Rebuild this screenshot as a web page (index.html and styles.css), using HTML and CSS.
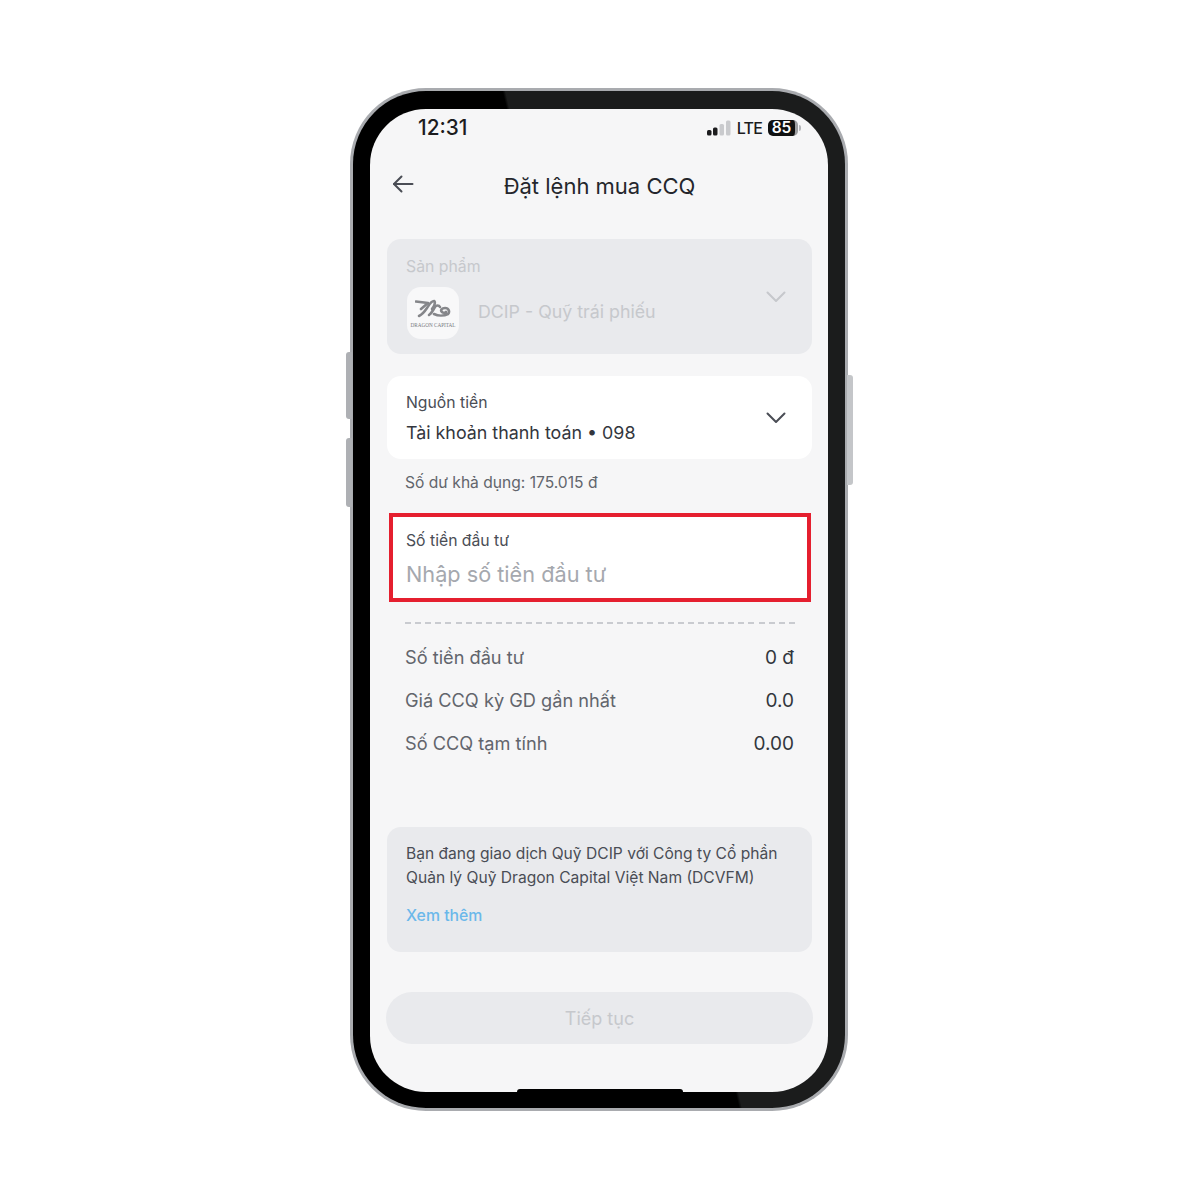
FILE: index.html
```html
<!DOCTYPE html>
<html lang="vi">
<head>
  <meta charset="UTF-8" />
  <title>Đặt lệnh mua CCQ</title>
  <link rel="stylesheet" href="styles.css">
</head>
<body>
  <div class="phone">
    <span class="side-btn side-vol-up"></span>
    <span class="side-btn side-vol-down"></span>
    <span class="side-btn side-power"></span>
    <div class="bezel">
      <span class="home-bar"></span>
      <div class="screen">
        <div class="status-bar">
          <span class="time">12:31</span>
          <div class="status-right">
            <svg class="signal" width="24" height="16" viewBox="0 0 24 16">
              <rect x="0" y="10" width="4.5" height="5.5" rx="1.5" fill="#1c1c1e"/>
              <rect x="6" y="7.5" width="4.5" height="8" rx="1.5" fill="#1c1c1e"/>
              <rect x="12.5" y="4" width="4.5" height="11.5" rx="1.5" fill="#c9cacd"/>
              <rect x="19" y="0.5" width="4.5" height="15" rx="1.5" fill="#c9cacd"/>
            </svg>
            <span class="lte">LTE</span>
            <span class="battery">85</span>
            <span class="battery-tip"></span>
          </div>
        </div>

        <div class="nav-bar">
          <svg class="back" width="22" height="18" viewBox="0 0 22 18" fill="none" stroke="#4a4d55" stroke-width="2" stroke-linecap="round" stroke-linejoin="round">
            <path d="M20.5 9H2"/>
            <path d="M9.5 1.5L2 9l7.5 7.5"/>
          </svg>
          <h1 class="title">Đặt lệnh mua CCQ</h1>
        </div>

        <div class="card card-disabled">
          <div class="label">Sản phẩm</div>
          <div class="product-row">
            <div class="logo">
              <svg width="36" height="19" viewBox="0 0 36 19" fill="none" stroke="#85868a" stroke-width="2.6" stroke-linecap="round" stroke-linejoin="round">
                <path d="M1 2.5l12 1.5-7 6"/>
                <path d="M4 17c4-2 6-5 8-8 2-3 4-7 7-7 2 1 0 6-2 8"/>
                <path d="M14 16c3-2 4-5 6-8 1-2 4-2 5 0"/>
                <path d="M19 15c4 2 10 2 14 0 2-2 1-6-3-6-3 0-5 2-3 4 1 1 3 1 4 0"/>
              </svg>
              <span class="logo-text">DRAGON CAPITAL</span>
            </div>
            <span class="product-name">DCIP - Quỹ trái phiếu</span>
          </div>
          <svg class="chevron chevron-disabled" width="20" height="12" viewBox="0 0 20 12" fill="none" stroke-width="2" stroke-linecap="round" stroke-linejoin="round">
            <path d="M1.5 1.5l8.5 8.5 8.5-8.5"/>
          </svg>
        </div>

        <div class="card card-source">
          <div class="label">Nguồn tiền</div>
          <div class="source-value">Tài khoản thanh toán • 098</div>
          <svg class="chevron" width="20" height="12" viewBox="0 0 20 12" fill="none" stroke-width="2" stroke-linecap="round" stroke-linejoin="round">
            <path d="M1.5 1.5l8.5 8.5 8.5-8.5"/>
          </svg>
        </div>

        <div class="balance">Số dư khả dụng: 175.015 đ</div>

        <div class="amount-box">
          <div class="label">Số tiền đầu tư</div>
          <div class="placeholder">Nhập số tiền đầu tư</div>
        </div>

        <div class="divider"></div>

        <div class="summary">
          <div class="summary-row"><span>Số tiền đầu tư</span><span class="summary-val">0 đ</span></div>
          <div class="summary-row"><span>Giá CCQ kỳ GD gần nhất</span><span class="summary-val">0.0</span></div>
          <div class="summary-row"><span>Số CCQ tạm tính</span><span class="summary-val">0.00</span></div>
        </div>

        <div class="info-card">
          <p>Bạn đang giao dịch Quỹ DCIP với Công ty Cổ phần Quản lý Quỹ Dragon Capital Việt Nam (DCVFM)</p>
          <div class="more">Xem thêm</div>
        </div>

        <div class="next-btn">Tiếp tục</div>
      </div>
    </div>
  </div>
</body>
</html>
```

FILE: styles.css
```css
* {
  margin: 0;
  padding: 0;
  box-sizing: border-box;
  font-family: 'Inter', 'Liberation Sans', sans-serif;
}

body {
  background-color: #fff;
  display: flex;
  justify-content: center;
  padding-top: 88px;
  height: 1200px;
  overflow: hidden;
}

.phone {
  position: relative;
  width: 498px;
  height: 1023px;
  margin-right: 2px;
  padding: 3px;
  border-radius: 76px;
  background-color: #a9abaf;
}

.side-btn {
  position: absolute;
  width: 6px;
  background-color: #aeb0b4;
}

.side-vol-up {
  left: -4px;
  top: 264px;
  height: 67px;
  border-radius: 3px 0 0 3px;
}

.side-vol-down {
  left: -4px;
  top: 350px;
  height: 69px;
  border-radius: 3px 0 0 3px;
}

.side-power {
  right: -5px;
  top: 287px;
  height: 110px;
  border-radius: 0 3px 3px 0;
  background-color: #c4c6c9;
}

.bezel {
  position: relative;
  height: 100%;
  padding: 18px 17px 16px;
  border-radius: 73px;
  background: linear-gradient(76.9deg, #000 53%, #1b1c1c 53.4%);
}

.home-bar {
  position: absolute;
  left: 164px;
  bottom: 16px;
  width: 166px;
  height: 3px;
  border-radius: 3px 3px 0 0;
  background-color: #000;
  z-index: 2;
}

.screen {
  height: 100%;
  border-radius: 56px;
  background-color: #f6f6f7;
  padding: 0 16px 0 17px;
  overflow: hidden;
}

.status-bar {
  display: flex;
  justify-content: space-between;
  align-items: center;
  height: 36px;
  padding: 0 11px 0 31px;
}

.time {
  font-size: 20.8px;
  font-weight: 500;
  color: #1c1c1e;
}

.status-right {
  display: flex;
  align-items: center;
  margin-top: 2px;
}

.signal {
  margin-right: 6px;
}

.lte {
  font-size: 16px;
  font-weight: 500;
  letter-spacing: -0.8px;
  color: #1c1c1e;
  margin-right: 6px;
}

.battery {
  width: 30px;
  height: 16px;
  border-right: 3px solid #9d9ea1;
  border-radius: 5px;
  background-color: #111;
  color: #fff;
  font-size: 15.5px;
  font-weight: 600;
  line-height: 16px;
  text-align: center;
}

.battery-tip {
  width: 2px;
  height: 6px;
  margin-left: 1px;
  border-radius: 0 2px 2px 0;
  background-color: #b5b6b9;
}

.nav-bar {
  position: relative;
  display: flex;
  justify-content: center;
  align-items: center;
  height: 46px;
  margin-top: 18px;
}

.back {
  position: absolute;
  left: 5px;
  top: 12px;
}

.title {
  font-size: 22px;
  font-weight: 400;
  color: #24262c;
}

.card {
  position: relative;
  border-radius: 14px;
  padding: 0 19px;
}

.card-disabled {
  height: 115px;
  margin-top: 30px;
  padding-top: 18px;
  background-color: #e9eaed;
}

.label {
  font-size: 15.75px;
  line-height: 20px;
  color: #4a4d55;
}

.card-disabled .label {
  font-size: 15.8px;
  color: #c6c8cc;
}

.product-row {
  display: flex;
  align-items: center;
  gap: 19px;
  margin-top: 10px;
}

.logo {
  display: flex;
  flex-direction: column;
  align-items: center;
  justify-content: center;
  width: 52px;
  height: 52px;
  margin-left: 1px;
  border-radius: 14px;
  background-color: #f8f8f9;
}

.logo-text {
  font-family: 'Liberation Serif', serif;
  font-size: 5.2px;
  color: #77797e;
  white-space: nowrap;
  margin-top: 4px;
}

.product-name {
  margin-bottom: 3px;
  font-size: 17.8px;
  color: #c6c8cc;
}

.chevron {
  position: absolute;
  right: 26px;
  top: 36px;
  stroke: #4a4d55;
}

.chevron-disabled {
  top: 52px;
  stroke: #c6c8cc;
}

.card-source {
  height: 83px;
  margin-top: 22px;
  padding-top: 17px;
  background-color: #fff;
}

.source-value {
  margin-top: 9px;
  font-size: 17.85px;
  line-height: 22px;
  color: #33363d;
}

.balance {
  margin-top: 14px;
  padding-left: 18px;
  font-size: 15.6px;
  line-height: 20px;
  color: #62656c;
}

.amount-box {
  height: 89px;
  margin: 20px 1px 0 2px;
  padding: 14px 13px 0;
  border: 4px solid #e51f2f;
  background-color: #fff;
}

.placeholder {
  margin-top: 9px;
  font-size: 21.7px;
  line-height: 28px;
  color: #a5a8ae;
}

.divider {
  height: 2px;
  margin: 20px 17px 0 18px;
  background-image: repeating-linear-gradient(to right, #c9cbd0 0, #c9cbd0 6px, transparent 6px, transparent 10.1px);
}

.summary {
  margin: 12px 18px 0;
}

.summary-row {
  display: flex;
  justify-content: space-between;
  align-items: baseline;
  height: 43px;
  font-size: 18.2px;
  line-height: 43px;
  color: #62656c;
}

.summary-val {
  font-size: 19px;
  color: #33363d;
}

.info-card {
  height: 125px;
  margin-top: 62px;
  padding: 15px 19px 0;
  border-radius: 14px;
  background-color: #e9eaed;
  font-size: 15.6px;
  line-height: 24px;
  color: #4a4d55;
}

.more {
  margin-top: 14px;
  font-size: 15.8px;
  font-weight: 500;
  color: #6bb8ea;
}

.next-btn {
  height: 52px;
  margin: 40px -1px 0;
  border-radius: 27px;
  background-color: #e9eaed;
  color: #c6c8cc;
  font-size: 18px;
  line-height: 54px;
  text-align: center;
}
```
